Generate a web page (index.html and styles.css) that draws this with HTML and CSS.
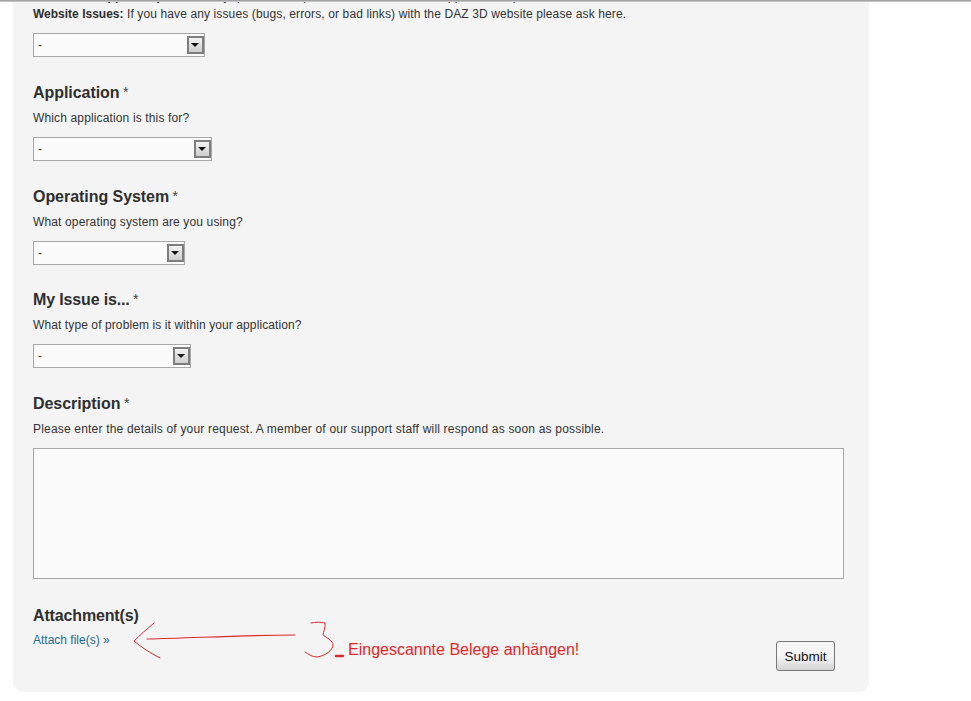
FILE: index.html
```html
<!DOCTYPE html>
<html lang="en">
<head>
<meta charset="utf-8">
<title>Support request</title>
<link rel="stylesheet" href="styles.css">
</head>
<body>
<div class="topline"></div>
<main class="panel">
  <div class="clipped"><p><b>Technical Support:</b> If you have any questions or problems with one of our applications, please ask here.</p></div>
  <p class="desc first"><b>Website Issues:</b> If you have any issues (bugs, errors, or bad links) with the DAZ 3D website please ask here.</p>
  <div class="select w-172"><span>-</span><i class="arrow"></i></div>

  <section class="field">
    <h2>Application <span class="req">*</span></h2>
    <p class="desc">Which application is this for?</p>
    <div class="select w-179"><span>-</span><i class="arrow"></i></div>
  </section>

  <section class="field">
    <h2>Operating System <span class="req">*</span></h2>
    <p class="desc">What operating system are you using?</p>
    <div class="select w-152"><span>-</span><i class="arrow"></i></div>
  </section>

  <section class="field tight">
    <h2 class="narrow">My Issue is... <span class="req">*</span></h2>
    <p class="desc close">What type of problem is it within your application?</p>
    <div class="select w-158"><span>-</span><i class="arrow"></i></div>
  </section>

  <section class="field">
    <h2>Description <span class="req">*</span></h2>
    <p class="desc wide">Please enter the details of your request. A member of our support staff will respond as soon as possible.</p>
    <div class="textarea"></div>
  </section>

  <section class="attach">
    <div>
      <h2 class="narrow">Attachment(s)</h2>
      <a class="link" href="#">Attach file(s) »</a>
    </div>
    <button class="submit" type="button">Submit</button>
  </section>

  <svg class="marks" width="290" height="50" viewBox="0 0 290 50" fill="none" stroke="#de2a2e" stroke-linecap="round" stroke-linejoin="round">
    <path d="M141 5 C134 11 127 17 121 23 C128 29 137 35 147 40" stroke-width="1"/>
    <path d="M134 21 C180 20 235 17 282 17" stroke-width="1.2"/>
  </svg>
  <svg class="three" width="50" height="50" viewBox="0 0 50 50" fill="none" stroke="#de2a2e" stroke-linecap="round" stroke-linejoin="round">
    <path d="M8 2 C13 1 18 1 22 2 C23 6 20 11 20 14 C24 17 30 20 30 24 C30 29 22 35 14 36 C9 36 5 33 2 31" stroke-width="1"/>
    <path d="M33 35 H40" stroke-width="2.4"/>
  </svg>
  <span class="note">Eingescannte Belege anhängen!</span>
</main>
</body>
</html>
```
FILE: styles.css
```css
* { box-sizing: border-box; }
html, body { margin: 0; padding: 0; background: #fff; }
body {
  height: 701px;
  overflow: hidden;
  font-family: "Liberation Sans", Arial, sans-serif;
  color: #333;
}
.topline { height: 2px; border-top: 1px solid #a3a3a3; background: #c4c4c4; }
.panel {
  position: relative;
  margin-left: 13px;
  width: 856px;
  height: 690px;
  padding: 0 25px 0 20px;
  background: #f4f4f4;
  border-radius: 0 0 10px 10px;
}
.clipped { height: 1px; overflow: hidden; font-size: 12px; }
.clipped p { margin: -13px 0 0; line-height: 14px; white-space: nowrap; letter-spacing: 0.12px; }
h2 { height: 20px; margin: 0; font-size: 16px; line-height: 18px; font-weight: bold; color: #2f2f2f; letter-spacing: -0.05px; }
h2.narrow { letter-spacing: -0.15px; }
.attach h2 { line-height: 20px; }
.req { margin-left: -1px; font-weight: normal; font-size: 14px; color: #444; vertical-align: 1px; }
.desc { margin: 7px 0 0; font-size: 12px; line-height: 16px; color: #333; letter-spacing: 0.14px; }
.desc.first { margin-top: 3px; letter-spacing: 0.12px; }
.desc.wide { letter-spacing: 0.19px; }
.desc.close { letter-spacing: 0.1px; }
.desc b { color: #2f2f2f; letter-spacing: 0; }
.field { margin-top: 26px; }
.field.tight { margin-top: 25px; }
.select {
  display: flex;
  align-items: center;
  justify-content: space-between;
  height: 24px;
  margin-top: 11px;
  padding: 0 0 0 4px;
  border: 1px solid #a8a8a8;
  background: #fbfbfb;
  font-size: 12px;
  color: #333;
}
.w-172 { width: 172px; }
.w-179 { width: 179px; }
.w-152 { width: 152px; }
.w-158 { width: 158px; }
.arrow {
  position: relative;
  width: 17px;
  height: 18px;
  border: 2px solid #7d7d7d;
  background: linear-gradient(#f2f2f2, #cfcfcf);
}
.arrow::after {
  content: "";
  position: absolute;
  left: 2px;
  top: 5px;
  border-style: solid;
  border-width: 4px 4px 0;
  border-color: #111 transparent transparent;
}
.textarea {
  width: 811px;
  height: 131px;
  margin-top: 11px;
  border: 1px solid #a8a8a8;
  background: #fbfbfb;
}
.attach {
  display: flex;
  justify-content: space-between;
  align-items: flex-start;
  margin-top: 27px;
}
.link { display: block; margin-top: 6px; font-size: 12px; line-height: 16px; color: #1f6a94; text-decoration: none; }
.submit {
  width: 59px;
  height: 30px;
  margin: 35px 9px 0 0;
  padding: 0;
  border: 1px solid #777;
  border-radius: 3px;
  background: linear-gradient(#f6f6f6 50%, #d4d4d4);
  font: 13.5px "Liberation Sans", Arial, sans-serif;
  color: #111;
}
.marks { position: absolute; left: 0; top: 616px; }
.three { position: absolute; left: 290px; top: 619px; }
.note { position: absolute; left: 335px; top: 638px; font-size: 16px; line-height: 20px; color: #e0282c; white-space: nowrap; }
```
